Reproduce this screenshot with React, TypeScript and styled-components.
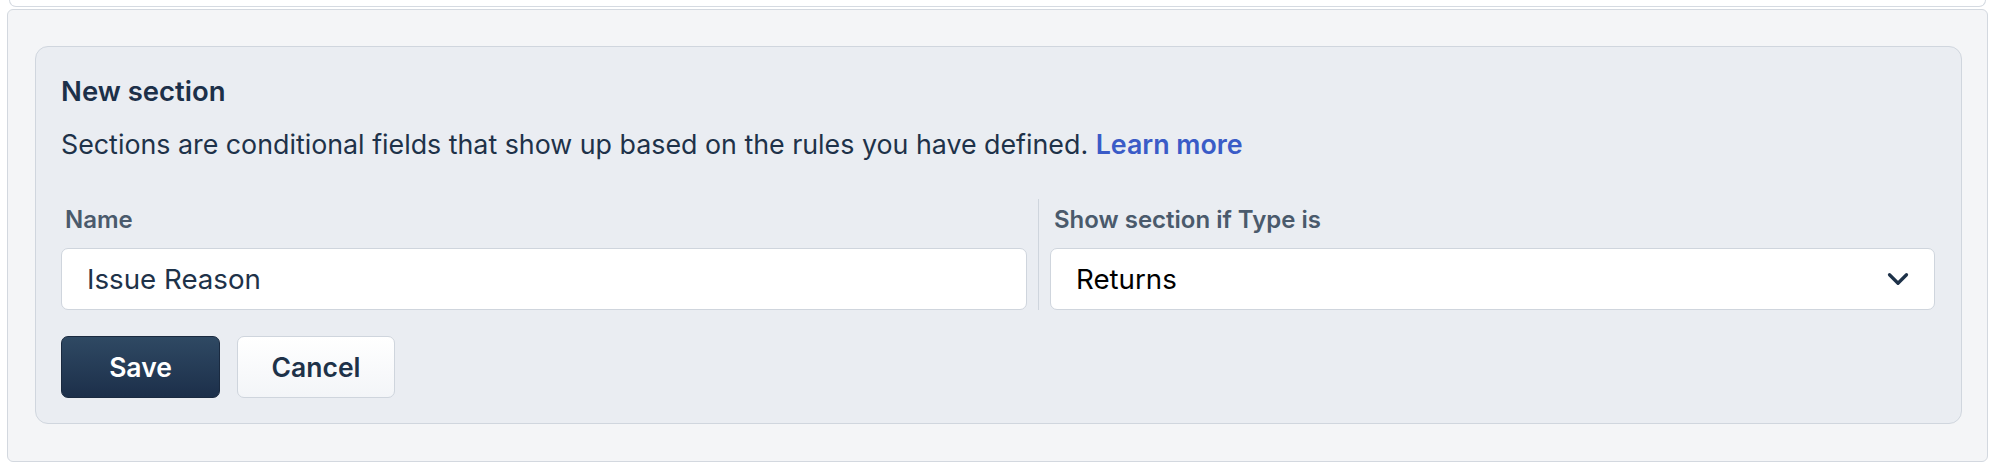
import React from 'react';
import styled, { createGlobalStyle } from 'styled-components';
import { ChevronDown } from 'lucide-react';

const GlobalStyle = createGlobalStyle`
  html, body {
    margin: 0;
    padding: 0;
    background: #ffffff;
  }

  body {
    font-family: Inter, "Noto Sans", "Liberation Sans", sans-serif;
    color: #1e3249;
    -webkit-font-smoothing: antialiased;
  }

  * {
    box-sizing: border-box;
  }
`;

const Page = styled.div`
  padding: 0 10px 0 7px;
`;

const PrevCard = styled.div`
  height: 7px;
  margin: 0 2px;
  background: #ffffff;
  border: 1px solid #d5dae1;
  border-top: none;
  border-radius: 0 0 10px 10px;
`;

const SectionPanel = styled.section`
  margin-top: 2px;
  padding: 36px 25px 37px 27px;
  background: #f4f5f7;
  border: 1px solid #d3d8df;
  border-radius: 6px;
`;

const SectionCard = styled.div`
  padding: 28px 26px 25px 25px;
  background: #eaedf2;
  border: 1px solid #d0d6de;
  border-radius: 13px;
`;

const Title = styled.h3`
  margin: 0;
  font-size: 27.5px;
  line-height: 32px;
  font-weight: 600;
  color: #1c3049;
`;

const Description = styled.p`
  margin: 21px 0 0;
  font-size: 26.8px;
  line-height: 32px;
  font-weight: 400;
  color: #1e3249;
`;

const LearnMore = styled.a`
  color: #3a5bc7;
  font-weight: 600;
  text-decoration: none;
  cursor: pointer;
`;

const FieldsRow = styled.div`
  display: grid;
  grid-template-columns: 977fr 897fr;
  margin-top: 39px;
`;

const Field = styled.div<{ $divided?: boolean }>`
  display: flex;
  flex-direction: column;
  padding: ${p => (p.$divided ? '7px 0 0 11px' : '7px 11px 0 0')};
  border-left: ${p => (p.$divided ? '1px solid #cfd5dd' : 'none')};
`;

const Label = styled.label`
  padding-left: 4px;
  font-size: 24px;
  line-height: 28px;
  font-weight: 600;
  color: #4a5a6c;
`;

const TextInput = styled.div`
  display: flex;
  align-items: center;
  height: 62px;
  margin-top: 14px;
  padding: 0 25px;
  background: #ffffff;
  border: 1px solid #cfd5dd;
  border-radius: 7px;
  font-size: 27.7px;
  color: #1e3249;
`;

const SelectBox = styled(TextInput)`
  justify-content: space-between;
  padding-right: 19px;
  color: #000000;

  svg {
    color: #1e3249;
  }
`;

const Actions = styled.div`
  display: flex;
  gap: 17px;
  margin-top: 26px;
`;

const Button = styled.button<{ $primary?: boolean }>`
  min-width: ${p => (p.$primary ? '159px' : '158px')};
  height: 62px;
  padding: 0 30px;
  font-family: inherit;
  font-size: 26.5px;
  font-weight: 600;
  border-radius: 7px;
  cursor: pointer;
  color: ${p => (p.$primary ? '#ffffff' : '#1e3249')};
  background: ${p =>
    p.$primary
      ? 'linear-gradient(180deg, #2f4963 0%, #1c2f4a 100%)'
      : 'linear-gradient(180deg, #ffffff 0%, #f3f5f8 100%)'};
  border: 1px solid ${p => (p.$primary ? '#1a2a40' : '#cfd5dd')};
`;

export default function App() {
  return (
    <>
      <GlobalStyle />
      <Page>
        <PrevCard />
        <SectionPanel>
          <SectionCard>
            <Title>New section</Title>
            <Description>
              Sections are conditional fields that show up based on the rules you have defined.{' '}
              <LearnMore>Learn more</LearnMore>
            </Description>

            <FieldsRow>
              <Field>
                <Label>Name</Label>
                <TextInput>Issue Reason</TextInput>
              </Field>
              <Field $divided>
                <Label>Show section if Type is</Label>
                <SelectBox>
                  <span>Returns</span>
                  <ChevronDown size={34} strokeWidth={2.3} />
                </SelectBox>
              </Field>
            </FieldsRow>

            <Actions>
              <Button $primary>Save</Button>
              <Button>Cancel</Button>
            </Actions>
          </SectionCard>
        </SectionPanel>
      </Page>
    </>
  );
}
